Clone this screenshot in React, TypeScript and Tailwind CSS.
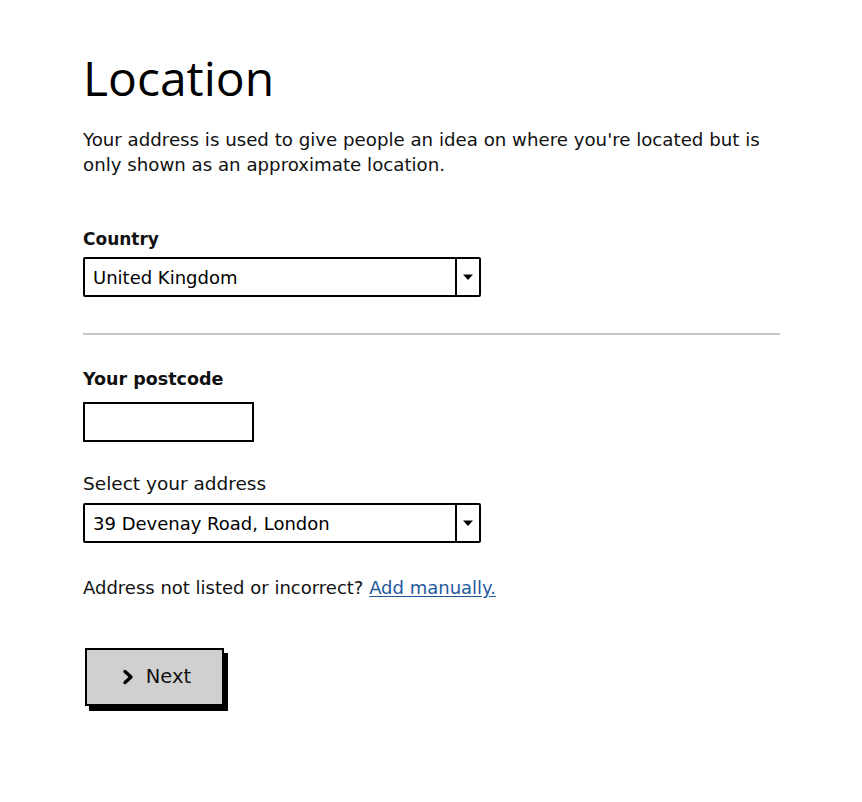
import React from "react";

function Select({ value }: { value: string }) {
  return (
    <div className="flex h-[40px] w-[398px] items-stretch rounded-[2px] border-2 border-black bg-white">
      <div className="flex flex-1 items-center pl-[8px] text-[18px] text-black">{value}</div>
      <div className="flex w-[24px] items-center justify-center border-l-2 border-black">
        <svg width="12" height="8" viewBox="0 0 12 8">
          <path d="M1 1.5 L11 1.5 L6 7 Z" fill="#000" />
        </svg>
      </div>
    </div>
  );
}

export default function App() {
  return (
    <div
      className="min-h-[802px] w-[862px] bg-white text-[#111]"
      style={{ fontFamily: '"DejaVu Sans", "Liberation Sans", sans-serif' }}
    >
      <div className="flex flex-col pl-[83px] pt-[50px]">
        <h1
          className="text-[48px] leading-[56px] font-normal text-black"
          style={{ fontFamily: '"Open Sans", sans-serif' }}
        >
          Location
        </h1>
        <p className="mt-[21px] w-[700px] text-[18.2px] leading-[25px]">
          Your address is used to give people an idea on where you're located but is only shown as an approximate location.
        </p>

        <div className="mt-[50px] text-[17px] font-bold leading-[24px]">Country</div>
        <div className="mt-[6px]">
          <Select value="United Kingdom" />
        </div>

        <div className="mt-[36px] h-[2px] w-[697px] bg-[#c8c8c8]" />

        <div className="mt-[32px] text-[17.5px] font-bold leading-[24px]">Your postcode</div>
        <div className="mt-[11px] h-[40px] w-[171px] border-2 border-black bg-white" />

        <div className="mt-[30px] text-[18.5px] leading-[24px]">Select your address</div>
        <div className="mt-[7px]">
          <Select value="39 Devenay Road, London" />
        </div>

        <div className="mt-[33px] text-[18px] leading-[24px]">
          Address not listed or incorrect?{" "}
          <span className="text-[#1f5a9e] underline underline-offset-2">Add manually.</span>
        </div>

        <div className="mt-[48px] pl-[2px]">
          <div className="flex h-[58px] w-[139px] items-center justify-center gap-[12px] border-2 border-black bg-[#d0d0d0] pl-[4px] text-[19.5px] shadow-[4px_5px_0_0_#000]">
            <svg width="12" height="16" viewBox="0 0 12 16">
              <path d="M3 2.5 L9 8 L3 13.5" fill="none" stroke="#000" strokeWidth="3.4" strokeLinecap="round" strokeLinejoin="round" />
            </svg>
            <span>Next</span>
          </div>
        </div>
      </div>
    </div>
  );
}
